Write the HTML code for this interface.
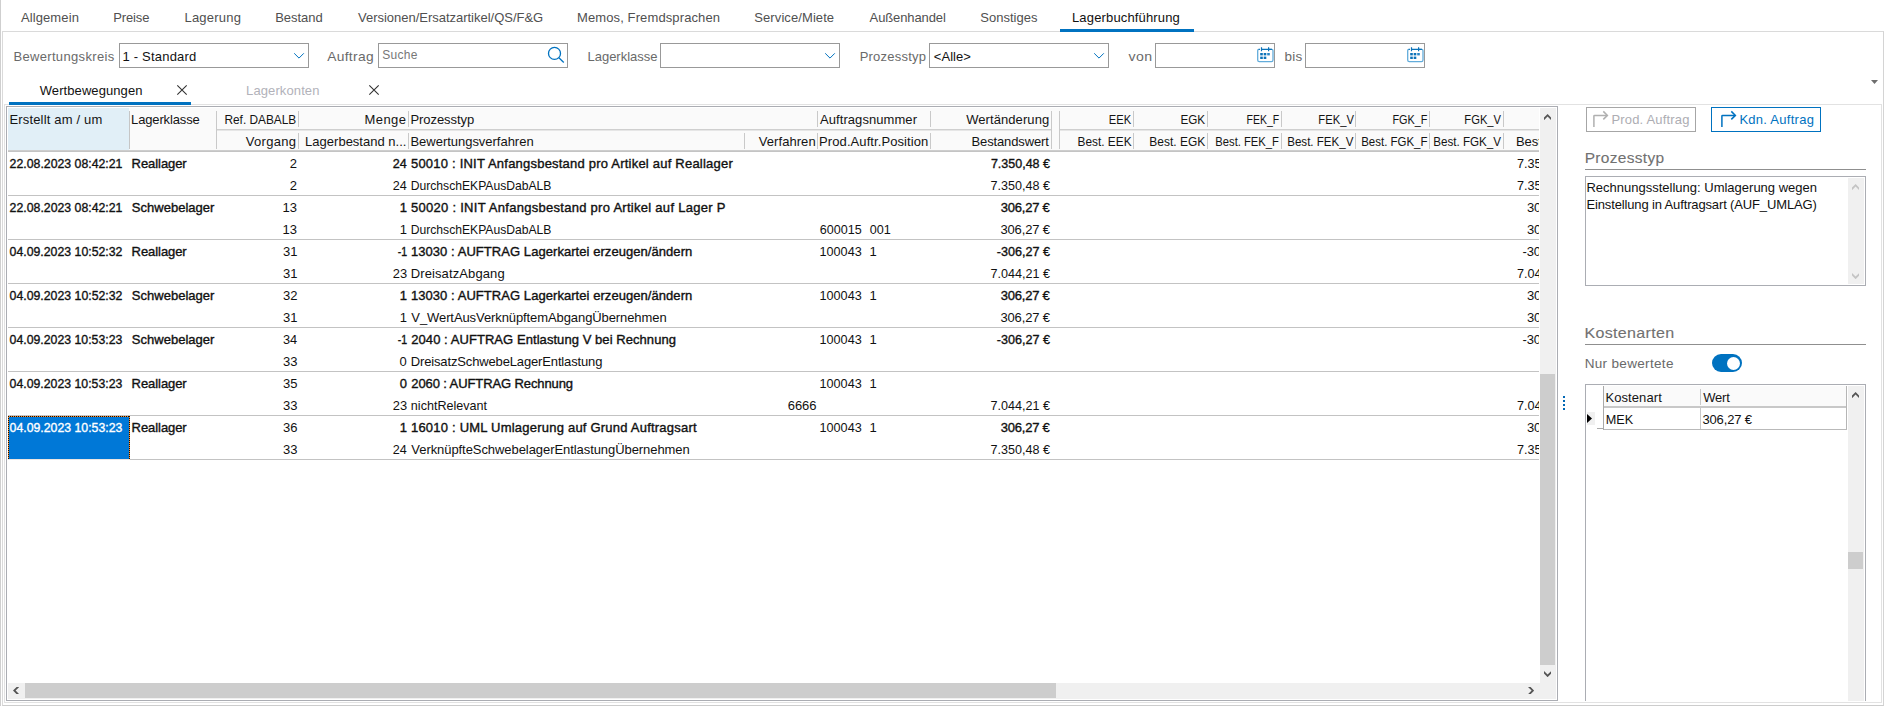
<!DOCTYPE html>
<html lang="de"><head><meta charset="utf-8"><title>Lagerbuchführung</title>
<style>
html,body{margin:0;padding:0;background:#fff;overflow:hidden}
#app{position:relative;width:1884px;height:706px;overflow:hidden;background:#fff;font-family:"Liberation Sans", sans-serif;font-size:13px}
#app div,#app span,#app svg{position:absolute;display:block;white-space:pre}
</style></head><body><div id="app">
<div style="left:0px;top:0px;width:1px;height:706px;background:#cfcfcf;"></div>
<div style="left:2px;top:31px;width:1882px;height:675px;box-sizing:border-box;border:1px solid #dadada;border-bottom-color:#cdcdcd;border-right-color:#d4d4d4"></div>
<span style="left:20.89px;top:10.00px;font-size:13px;line-height:15px;color:#505050;letter-spacing:0.115px;">Allgemein</span>
<span style="left:113.21px;top:10.00px;font-size:13px;line-height:15px;color:#505050;letter-spacing:-0.124px;">Preise</span>
<span style="left:184.46px;top:10.00px;font-size:13px;line-height:15px;color:#505050;letter-spacing:0.222px;">Lagerung</span>
<span style="left:275.21px;top:10.00px;font-size:13px;line-height:15px;color:#505050;letter-spacing:-0.027px;">Bestand</span>
<span style="left:358.04px;top:10.00px;font-size:13px;line-height:15px;color:#505050;letter-spacing:-0.019px;">Versionen/Ersatzartikel/QS/F&amp;G</span>
<span style="left:576.99px;top:10.00px;font-size:13px;line-height:15px;color:#505050;letter-spacing:0.114px;">Memos, Fremdsprachen</span>
<span style="left:754.31px;top:10.00px;font-size:13px;line-height:15px;color:#505050;letter-spacing:0.088px;">Service/Miete</span>
<span style="left:869.60px;top:10.00px;font-size:13px;line-height:15px;color:#505050;letter-spacing:-0.113px;">Außenhandel</span>
<span style="left:980.31px;top:10.00px;font-size:13px;line-height:15px;color:#505050;">Sonstiges</span>
<span style="left:1071.99px;top:10.00px;font-size:13px;line-height:15px;color:#111;letter-spacing:0.154px;">Lagerbuchführung</span>
<div style="left:1060px;top:29px;width:134px;height:3px;background:#0072c0;"></div>
<span style="left:13.42px;top:49.00px;font-size:13px;line-height:15px;color:#6a6a6a;letter-spacing:0.333px;">Bewertungskreis</span>
<div style="left:119px;top:43px;width:190px;height:25px;box-sizing:border-box;border:1px solid #999999;background:#fff;"></div>
<span style="left:122.48px;top:49.00px;font-size:13px;line-height:15px;color:#111;letter-spacing:0.210px;">1 - Standard</span>
<svg style="left:293px;top:52px" width="12" height="8" viewBox="0 0 12 8"><path d="M1.2 1.3 L6 6.1 L10.8 1.3" fill="none" stroke="#0072c0" stroke-width="1.0"/></svg>
<span style="left:327px;top:49.00px;font-size:13px;line-height:15px;color:#6a6a6a;transform:translateX(0.19px) scaleX(1.0615);transform-origin:0 0;letter-spacing:0.300px;">Auftrag</span>
<div style="left:378px;top:43px;width:190px;height:25px;box-sizing:border-box;border:1px solid #999999;background:#fff;"></div>
<span style="left:382.22px;top:47.84px;font-size:12px;line-height:14px;color:#777;letter-spacing:0.281px;">Suche</span>
<svg style="left:546px;top:45px" width="20" height="20" viewBox="0 0 20 20"><circle cx="8.5" cy="8.4" r="6" fill="none" stroke="#0072c0" stroke-width="1.3"/><path d="M12.9 12.8 L17.8 17.5" stroke="#0072c0" stroke-width="1.3" fill="none"/></svg>
<span style="left:587.46px;top:49.00px;font-size:13px;line-height:15px;color:#6a6a6a;letter-spacing:-0.005px;">Lagerklasse</span>
<div style="left:660px;top:43px;width:180px;height:25px;box-sizing:border-box;border:1px solid #999999;background:#fff;"></div>
<svg style="left:824px;top:52px" width="12" height="8" viewBox="0 0 12 8"><path d="M1.2 1.3 L6 6.1 L10.8 1.3" fill="none" stroke="#0072c0" stroke-width="1.0"/></svg>
<span style="left:859.67px;top:49.00px;font-size:13px;line-height:15px;color:#6a6a6a;letter-spacing:0.227px;">Prozesstyp</span>
<div style="left:929px;top:43px;width:180px;height:25px;box-sizing:border-box;border:1px solid #999999;background:#fff;"></div>
<span style="left:933.85px;top:49.00px;font-size:13px;line-height:15px;color:#111;letter-spacing:0.018px;">&lt;Alle&gt;</span>
<svg style="left:1093px;top:52px" width="12" height="8" viewBox="0 0 12 8"><path d="M1.2 1.3 L6 6.1 L10.8 1.3" fill="none" stroke="#0072c0" stroke-width="1.0"/></svg>
<span style="left:1128px;top:49.00px;font-size:13px;line-height:15px;color:#6a6a6a;transform:translateX(0.61px) scaleX(1.0852);transform-origin:0 0;letter-spacing:0.300px;">von</span>
<div style="left:1155px;top:43px;width:120px;height:25px;box-sizing:border-box;border:1px solid #999999;background:#fff;"></div>
<span style="left:1284px;top:49.00px;font-size:13px;line-height:15px;color:#6a6a6a;transform:translateX(0.46px) scaleX(1.0349);transform-origin:0 0;letter-spacing:0.300px;">bis</span>
<div style="left:1305px;top:43px;width:120px;height:25px;box-sizing:border-box;border:1px solid #999999;background:#fff;"></div>
<svg style="left:1257px;top:47px" width="17" height="16" viewBox="0 0 17 16"><path d="M2.4 2.4 H1.9 Q0.7 2.4 0.7 3.8 V13 Q0.7 14.6 2.3 14.6 H14.4 Q16 14.6 16 13 V3.8 Q16 2.4 14.8 2.4 H12" fill="none" stroke="#62acdb" stroke-width="1.3"/><path d="M1.7 2.4 H2.9 M4.5 2.4 H11.6 M11.6 2.4 H14.9" stroke="#0a72b8" stroke-width="1.1" fill="none"/><path d="M4.5 0.2 V4.2 M11.6 0.2 V4.2" stroke="#0a72b8" stroke-width="1.2" fill="none"/><rect x="3.2" y="6.0" width="2.6" height="2.4" fill="#0a72b8"/><rect x="6.7" y="6.0" width="2.6" height="2.4" fill="#0a72b8"/><rect x="10.2" y="6.0" width="2.6" height="2.4" fill="#2a86c6"/><rect x="3.2" y="9.6" width="2.6" height="2.4" fill="#0a72b8"/><rect x="6.7" y="9.6" width="2.6" height="2.4" fill="#0a72b8"/></svg>
<svg style="left:1407px;top:47px" width="17" height="16" viewBox="0 0 17 16"><path d="M2.4 2.4 H1.9 Q0.7 2.4 0.7 3.8 V13 Q0.7 14.6 2.3 14.6 H14.4 Q16 14.6 16 13 V3.8 Q16 2.4 14.8 2.4 H12" fill="none" stroke="#62acdb" stroke-width="1.3"/><path d="M1.7 2.4 H2.9 M4.5 2.4 H11.6 M11.6 2.4 H14.9" stroke="#0a72b8" stroke-width="1.1" fill="none"/><path d="M4.5 0.2 V4.2 M11.6 0.2 V4.2" stroke="#0a72b8" stroke-width="1.2" fill="none"/><rect x="3.2" y="6.0" width="2.6" height="2.4" fill="#0a72b8"/><rect x="6.7" y="6.0" width="2.6" height="2.4" fill="#0a72b8"/><rect x="10.2" y="6.0" width="2.6" height="2.4" fill="#2a86c6"/><rect x="3.2" y="9.6" width="2.6" height="2.4" fill="#0a72b8"/><rect x="6.7" y="9.6" width="2.6" height="2.4" fill="#0a72b8"/></svg>
<svg style="left:1871px;top:80px" width="7" height="4" viewBox="0 0 7 4"><path d="M0 0 H7 L3.5 4 Z" fill="#6e6e6e"/></svg>
<span style="left:39.76px;top:83.00px;font-size:13px;line-height:15px;color:#111;letter-spacing:0.080px;">Wertbewegungen</span>
<svg style="left:175.5px;top:83.6px" width="12" height="12" viewBox="0 0 12 12"><path d="M1.3 1.3 L10.7 10.7 M10.7 1.3 L1.3 10.7" stroke="#333" stroke-width="1.1" fill="none"/></svg>
<span style="left:246.12px;top:83.00px;font-size:13px;line-height:15px;color:#b2b2ba;letter-spacing:0.102px;">Lagerkonten</span>
<svg style="left:367.5px;top:83.6px" width="12" height="12" viewBox="0 0 12 12"><path d="M1.3 1.3 L10.7 10.7 M10.7 1.3 L1.3 10.7" stroke="#333" stroke-width="1.1" fill="none"/></svg>
<div style="left:4px;top:104px;width:1878px;height:599px;box-sizing:border-box;border:1px solid #e2e2e2"></div>
<div style="left:9px;top:102px;width:182px;height:3px;background:#0072c0;"></div>
<div style="left:6px;top:106px;width:1552px;height:595px;box-sizing:border-box;border:1px solid #abadb3;background:#fff"></div>
<div style="left:8px;top:108px;width:1531px;height:42px;background:#fafafa;"></div>
<div style="left:8px;top:108px;width:121px;height:42px;background:#e1eff7;"></div>
<div style="left:8px;top:150px;width:1531px;height:1px;background:#cdcdcd;"></div>
<div style="left:8px;top:151px;width:1531px;height:1px;background:#c4c4c4;"></div>
<div style="left:217px;top:129px;width:835px;height:1px;background:#cfcfcf;"></div>
<div style="left:217px;top:130px;width:835px;height:1px;background:#e6e6e6;"></div>
<div style="left:1060px;top:129px;width:479px;height:1px;background:#cfcfcf;"></div>
<div style="left:1060px;top:130px;width:479px;height:1px;background:#e6e6e6;"></div>
<div style="left:129px;top:111px;width:1px;height:38px;background:#c6c6c6;"></div>
<div style="left:216px;top:111px;width:1px;height:38px;background:#c9c9c9;"></div>
<div style="left:298px;top:111px;width:1px;height:16px;background:#c9c9c9;"></div>
<div style="left:298px;top:133px;width:1px;height:16px;background:#c9c9c9;"></div>
<div style="left:408px;top:111px;width:1px;height:16px;background:#c9c9c9;"></div>
<div style="left:408px;top:133px;width:1px;height:16px;background:#c9c9c9;"></div>
<div style="left:817px;top:111px;width:1px;height:16px;background:#c9c9c9;"></div>
<div style="left:817px;top:133px;width:1px;height:16px;background:#c9c9c9;"></div>
<div style="left:930px;top:111px;width:1px;height:16px;background:#c9c9c9;"></div>
<div style="left:930px;top:133px;width:1px;height:16px;background:#c9c9c9;"></div>
<div style="left:1133px;top:111px;width:1px;height:16px;background:#c9c9c9;"></div>
<div style="left:1133px;top:133px;width:1px;height:16px;background:#c9c9c9;"></div>
<div style="left:1207px;top:111px;width:1px;height:16px;background:#c9c9c9;"></div>
<div style="left:1207px;top:133px;width:1px;height:16px;background:#c9c9c9;"></div>
<div style="left:1281px;top:111px;width:1px;height:16px;background:#c9c9c9;"></div>
<div style="left:1281px;top:133px;width:1px;height:16px;background:#c9c9c9;"></div>
<div style="left:1355px;top:111px;width:1px;height:16px;background:#c9c9c9;"></div>
<div style="left:1355px;top:133px;width:1px;height:16px;background:#c9c9c9;"></div>
<div style="left:1429px;top:111px;width:1px;height:16px;background:#c9c9c9;"></div>
<div style="left:1429px;top:133px;width:1px;height:16px;background:#c9c9c9;"></div>
<div style="left:1503px;top:111px;width:1px;height:16px;background:#c9c9c9;"></div>
<div style="left:1503px;top:133px;width:1px;height:16px;background:#c9c9c9;"></div>
<div style="left:744px;top:133px;width:1px;height:16px;background:#c9c9c9;"></div>
<div style="left:1051px;top:111px;width:1px;height:38px;background:#c9c9c9;"></div>
<div style="left:1059px;top:111px;width:1px;height:38px;background:#c9c9c9;"></div>
<span style="left:9.42px;top:112.00px;font-size:13px;line-height:15px;color:#141414;letter-spacing:0.171px;">Erstellt am / um</span>
<span style="left:131.06px;top:112.00px;font-size:13px;line-height:15px;color:#141414;letter-spacing:-0.135px;">Lagerklasse</span>
<span style="left:224px;top:112.00px;font-size:13px;line-height:15px;color:#141414;transform:translateX(0.46px) scaleX(0.9119);transform-origin:0 0;">Ref. DABALB</span>
<span style="left:364.57px;top:112.00px;font-size:13px;line-height:15px;color:#141414;letter-spacing:0.421px;">Menge</span>
<span style="left:410.46px;top:112.00px;font-size:13px;line-height:15px;color:#141414;letter-spacing:-0.064px;">Prozesstyp</span>
<span style="left:820.04px;top:112.00px;font-size:13px;line-height:15px;color:#141414;letter-spacing:0.067px;">Auftragsnummer</span>
<span style="left:966.14px;top:112.00px;font-size:13px;line-height:15px;color:#141414;letter-spacing:0.084px;">Wertänderung</span>
<span style="left:1108px;top:112.00px;font-size:13px;line-height:15px;color:#141414;transform:translateX(0.82px) scaleX(0.8607);transform-origin:0 0;">EEK</span>
<span style="left:1180px;top:112.00px;font-size:13px;line-height:15px;color:#141414;transform:translateX(0.41px) scaleX(0.9007);transform-origin:0 0;">EGK</span>
<span style="left:1246px;top:112.00px;font-size:13px;line-height:15px;color:#141414;transform:translateX(0.50px) scaleX(0.8066);transform-origin:0 0;">FEK_F</span>
<span style="left:1318px;top:112.00px;font-size:13px;line-height:15px;color:#141414;transform:translateX(0.36px) scaleX(0.8628);transform-origin:0 0;">FEK_V</span>
<span style="left:1392px;top:112.00px;font-size:13px;line-height:15px;color:#141414;transform:translateX(0.41px) scaleX(0.8339);transform-origin:0 0;">FGK_F</span>
<span style="left:1464px;top:112.00px;font-size:13px;line-height:15px;color:#141414;transform:translateX(0.34px) scaleX(0.8618);transform-origin:0 0;">FGK_V</span>
<span style="left:245.87px;top:134.00px;font-size:13px;line-height:15px;color:#141414;letter-spacing:0.287px;">Vorgang</span>
<span style="left:305.12px;top:134.00px;font-size:13px;line-height:15px;color:#141414;letter-spacing:0.007px;">Lagerbestand n...</span>
<span style="left:410.46px;top:134.00px;font-size:13px;line-height:15px;color:#141414;letter-spacing:-0.023px;">Bewertungsverfahren</span>
<span style="left:758.83px;top:134.00px;font-size:13px;line-height:15px;color:#141414;letter-spacing:0.053px;">Verfahren</span>
<span style="left:819.12px;top:134.00px;font-size:13px;line-height:15px;color:#141414;letter-spacing:0.081px;">Prod.Auftr.Position</span>
<span style="left:971.49px;top:134.00px;font-size:13px;line-height:15px;color:#141414;letter-spacing:-0.121px;">Bestandswert</span>
<span style="left:1077px;top:134.00px;font-size:13px;line-height:15px;color:#141414;transform:translateX(0.52px) scaleX(0.9125);transform-origin:0 0;">Best. EEK</span>
<span style="left:1149px;top:134.00px;font-size:13px;line-height:15px;color:#141414;transform:translateX(0.37px) scaleX(0.9211);transform-origin:0 0;">Best. EGK</span>
<span style="left:1215px;top:134.00px;font-size:13px;line-height:15px;color:#141414;transform:translateX(0.32px) scaleX(0.8622);transform-origin:0 0;">Best. FEK_F</span>
<span style="left:1287px;top:134.00px;font-size:13px;line-height:15px;color:#141414;transform:translateX(0.22px) scaleX(0.8901);transform-origin:0 0;">Best. FEK_V</span>
<span style="left:1361px;top:134.00px;font-size:13px;line-height:15px;color:#141414;transform:translateX(0.18px) scaleX(0.8824);transform-origin:0 0;">Best. FGK_F</span>
<span style="left:1433px;top:134.00px;font-size:13px;line-height:15px;color:#141414;transform:translateX(0.19px) scaleX(0.8937);transform-origin:0 0;">Best. FGK_V</span>
<div style="left:0;top:0;width:1539px;height:706px;overflow:hidden"><span style="left:1515.99px;top:134.00px;font-size:13px;line-height:15px;color:#141414;letter-spacing:-0.082px;">Best. MEK</span></div>
<div style="left:8px;top:416px;width:122px;height:43px;background:#0078d7;"></div>
<div style="left:8px;top:195px;width:1531px;height:1px;background:#c3c3c3;"></div>
<div style="left:8px;top:239px;width:1531px;height:1px;background:#c3c3c3;"></div>
<div style="left:8px;top:283px;width:1531px;height:1px;background:#c3c3c3;"></div>
<div style="left:8px;top:327px;width:1531px;height:1px;background:#c3c3c3;"></div>
<div style="left:8px;top:371px;width:1531px;height:1px;background:#c3c3c3;"></div>
<div style="left:8px;top:415px;width:1531px;height:1px;background:#c3c3c3;"></div>
<div style="left:8px;top:459px;width:1531px;height:1px;background:#c3c3c3;"></div>
<div style="left:8px;top:416px;width:122px;height:1px;background:repeating-linear-gradient(90deg,#1a1200 0 1px,#ff8a2a 1px 2px);"></div>
<div style="left:8px;top:416px;width:1px;height:43px;background:repeating-linear-gradient(180deg,#1a1200 0 1px,#ff8a2a 1px 2px);"></div>
<div style="left:129px;top:416px;width:1px;height:43px;background:repeating-linear-gradient(180deg,#1a1200 0 1px,#ff8a2a 1px 2px);"></div>
<div style="left:8px;top:459px;width:122px;height:1px;background:#ece6e2;"></div>
<span style="left:9px;top:156.00px;font-size:13px;line-height:15px;color:#111;transform:translateX(0.62px) scaleX(0.9455);transform-origin:0 0;-webkit-text-stroke:0.37px #111;">22.08.2023 08:42:21</span>
<span style="left:131.62px;top:156.00px;font-size:13px;line-height:15px;color:#111;letter-spacing:-0.070px;-webkit-text-stroke:0.37px #111;">Reallager</span>
<span style="left:289.75px;top:156.00px;font-size:13px;line-height:15px;color:#111;">2</span>
<span style="left:392px;top:156.00px;font-size:13px;line-height:15px;color:#111;transform:translateX(0.81px) scaleX(0.9675);transform-origin:0 0;-webkit-text-stroke:0.37px #111;">24</span>
<span style="left:410.98px;top:156.00px;font-size:13px;line-height:15px;color:#111;letter-spacing:0.216px;-webkit-text-stroke:0.37px #111;">50010 : INIT Anfangsbestand pro Artikel auf Reallager</span>
<span style="left:990px;top:156.00px;font-size:13px;line-height:15px;color:#111;transform:translateX(0.92px) scaleX(0.9607);transform-origin:0 0;-webkit-text-stroke:0.37px #111;">7.350,48 €</span>
<div style="left:0;top:0;width:1539px;height:706px;overflow:hidden"><span style="left:1517px;top:156.00px;font-size:13px;line-height:15px;color:#111;transform:translateX(0.01px) scaleX(0.9696);transform-origin:0 0;">7.350,48 €</span></div>
<span style="left:289.75px;top:178.00px;font-size:13px;line-height:15px;color:#111;">2</span>
<span style="left:392px;top:178.00px;font-size:13px;line-height:15px;color:#111;transform:translateX(0.77px) scaleX(0.9706);transform-origin:0 0;">24</span>
<span style="left:410px;top:178.00px;font-size:13px;line-height:15px;color:#111;transform:translateX(0.68px) scaleX(0.9337);transform-origin:0 0;">DurchschEKPAusDabALB</span>
<span style="left:990px;top:178.00px;font-size:13px;line-height:15px;color:#111;transform:translateX(0.61px) scaleX(0.9670);transform-origin:0 0;">7.350,48 €</span>
<div style="left:0;top:0;width:1539px;height:706px;overflow:hidden"><span style="left:1517px;top:178.00px;font-size:13px;line-height:15px;color:#111;transform:translateX(0.01px) scaleX(0.9696);transform-origin:0 0;">7.350,48 €</span></div>
<span style="left:9px;top:200.00px;font-size:13px;line-height:15px;color:#111;transform:translateX(0.62px) scaleX(0.9455);transform-origin:0 0;-webkit-text-stroke:0.37px #111;">22.08.2023 08:42:21</span>
<span style="left:131.84px;top:200.00px;font-size:13px;line-height:15px;color:#111;letter-spacing:0.017px;-webkit-text-stroke:0.37px #111;">Schwebelager</span>
<span style="left:282.53px;top:200.00px;font-size:13px;line-height:15px;color:#111;">13</span>
<span style="left:399.71px;top:200.00px;font-size:13px;line-height:15px;color:#111;-webkit-text-stroke:0.37px #111;">1</span>
<span style="left:410.98px;top:200.00px;font-size:13px;line-height:15px;color:#111;letter-spacing:0.280px;-webkit-text-stroke:0.37px #111;">50020 : INIT Anfangsbestand pro Artikel auf Lager P</span>
<span style="left:1000.79px;top:200.00px;font-size:13px;line-height:15px;color:#111;letter-spacing:-0.234px;-webkit-text-stroke:0.37px #111;">306,27 €</span>
<div style="left:0;top:0;width:1539px;height:706px;overflow:hidden"><span style="left:1526.93px;top:200.00px;font-size:13px;line-height:15px;color:#111;letter-spacing:-0.119px;">306,27 €</span></div>
<span style="left:282.53px;top:222.00px;font-size:13px;line-height:15px;color:#111;">13</span>
<span style="left:399.68px;top:222.00px;font-size:13px;line-height:15px;color:#111;">1</span>
<span style="left:410px;top:222.00px;font-size:13px;line-height:15px;color:#111;transform:translateX(0.68px) scaleX(0.9337);transform-origin:0 0;">DurchschEKPAusDabALB</span>
<span style="left:819px;top:222.00px;font-size:13px;line-height:15px;color:#111;transform:translateX(0.86px) scaleX(0.9661);transform-origin:0 0;">600015</span>
<span style="left:869px;top:222.00px;font-size:13px;line-height:15px;color:#111;transform:translateX(0.67px) scaleX(0.9705);transform-origin:0 0;">001</span>
<span style="left:1000.46px;top:222.00px;font-size:13px;line-height:15px;color:#111;letter-spacing:-0.152px;">306,27 €</span>
<div style="left:0;top:0;width:1539px;height:706px;overflow:hidden"><span style="left:1526.93px;top:222.00px;font-size:13px;line-height:15px;color:#111;letter-spacing:-0.119px;">306,27 €</span></div>
<span style="left:9px;top:244.00px;font-size:13px;line-height:15px;color:#111;transform:translateX(0.54px) scaleX(0.9465);transform-origin:0 0;-webkit-text-stroke:0.37px #111;">04.09.2023 10:52:32</span>
<span style="left:131.62px;top:244.00px;font-size:13px;line-height:15px;color:#111;letter-spacing:-0.070px;-webkit-text-stroke:0.37px #111;">Reallager</span>
<span style="left:282.93px;top:244.00px;font-size:13px;line-height:15px;color:#111;">31</span>
<span style="left:397px;top:244.00px;font-size:13px;line-height:15px;color:#111;transform:translateX(0.64px) scaleX(0.8120);transform-origin:0 0;-webkit-text-stroke:0.37px #111;">-1</span>
<span style="left:410.94px;top:244.00px;font-size:13px;line-height:15px;color:#111;letter-spacing:0.057px;-webkit-text-stroke:0.37px #111;">13030 : AUFTRAG Lagerkartei erzeugen/ändern</span>
<span style="left:819px;top:244.00px;font-size:13px;line-height:15px;color:#111;transform:translateX(0.53px) scaleX(0.9725);transform-origin:0 0;">100043</span>
<span style="left:869.41px;top:244.00px;font-size:13px;line-height:15px;color:#111;">1</span>
<span style="left:996px;top:244.00px;font-size:13px;line-height:15px;color:#111;transform:translateX(0.80px) scaleX(0.9687);transform-origin:0 0;-webkit-text-stroke:0.37px #111;">-306,27 €</span>
<div style="left:0;top:0;width:1539px;height:706px;overflow:hidden"><span style="left:1522.61px;top:244.00px;font-size:13px;line-height:15px;color:#111;letter-spacing:-0.167px;">-306,27 €</span></div>
<span style="left:282.93px;top:266.00px;font-size:13px;line-height:15px;color:#111;">31</span>
<span style="left:392px;top:266.00px;font-size:13px;line-height:15px;color:#111;transform:translateX(0.75px) scaleX(0.9919);transform-origin:0 0;">23</span>
<span style="left:410.73px;top:266.00px;font-size:13px;line-height:15px;color:#111;letter-spacing:0.108px;">DreisatzAbgang</span>
<span style="left:990px;top:266.00px;font-size:13px;line-height:15px;color:#111;transform:translateX(0.61px) scaleX(0.9670);transform-origin:0 0;">7.044,21 €</span>
<div style="left:0;top:0;width:1539px;height:706px;overflow:hidden"><span style="left:1517px;top:266.00px;font-size:13px;line-height:15px;color:#111;transform:translateX(0.01px) scaleX(0.9696);transform-origin:0 0;">7.044,21 €</span></div>
<span style="left:9px;top:288.00px;font-size:13px;line-height:15px;color:#111;transform:translateX(0.54px) scaleX(0.9465);transform-origin:0 0;-webkit-text-stroke:0.37px #111;">04.09.2023 10:52:32</span>
<span style="left:131.84px;top:288.00px;font-size:13px;line-height:15px;color:#111;letter-spacing:0.017px;-webkit-text-stroke:0.37px #111;">Schwebelager</span>
<span style="left:282.93px;top:288.00px;font-size:13px;line-height:15px;color:#111;letter-spacing:0.024px;">32</span>
<span style="left:399.71px;top:288.00px;font-size:13px;line-height:15px;color:#111;-webkit-text-stroke:0.37px #111;">1</span>
<span style="left:410.94px;top:288.00px;font-size:13px;line-height:15px;color:#111;letter-spacing:0.057px;-webkit-text-stroke:0.37px #111;">13030 : AUFTRAG Lagerkartei erzeugen/ändern</span>
<span style="left:819px;top:288.00px;font-size:13px;line-height:15px;color:#111;transform:translateX(0.53px) scaleX(0.9725);transform-origin:0 0;">100043</span>
<span style="left:869.41px;top:288.00px;font-size:13px;line-height:15px;color:#111;">1</span>
<span style="left:1000.79px;top:288.00px;font-size:13px;line-height:15px;color:#111;letter-spacing:-0.234px;-webkit-text-stroke:0.37px #111;">306,27 €</span>
<div style="left:0;top:0;width:1539px;height:706px;overflow:hidden"><span style="left:1526.93px;top:288.00px;font-size:13px;line-height:15px;color:#111;letter-spacing:-0.119px;">306,27 €</span></div>
<span style="left:282.93px;top:310.00px;font-size:13px;line-height:15px;color:#111;">31</span>
<span style="left:399.68px;top:310.00px;font-size:13px;line-height:15px;color:#111;">1</span>
<span style="left:411.34px;top:310.00px;font-size:13px;line-height:15px;color:#111;letter-spacing:-0.091px;">V_WertAusVerknüpftemAbgangÜbernehmen</span>
<span style="left:1000.46px;top:310.00px;font-size:13px;line-height:15px;color:#111;letter-spacing:-0.152px;">306,27 €</span>
<div style="left:0;top:0;width:1539px;height:706px;overflow:hidden"><span style="left:1526.93px;top:310.00px;font-size:13px;line-height:15px;color:#111;letter-spacing:-0.119px;">306,27 €</span></div>
<span style="left:9px;top:332.00px;font-size:13px;line-height:15px;color:#111;transform:translateX(0.54px) scaleX(0.9457);transform-origin:0 0;-webkit-text-stroke:0.37px #111;">04.09.2023 10:53:23</span>
<span style="left:131.84px;top:332.00px;font-size:13px;line-height:15px;color:#111;letter-spacing:0.017px;-webkit-text-stroke:0.37px #111;">Schwebelager</span>
<span style="left:282px;top:332.00px;font-size:13px;line-height:15px;color:#111;transform:translateX(0.92px) scaleX(0.9811);transform-origin:0 0;">34</span>
<span style="left:397px;top:332.00px;font-size:13px;line-height:15px;color:#111;transform:translateX(0.64px) scaleX(0.8120);transform-origin:0 0;-webkit-text-stroke:0.37px #111;">-1</span>
<span style="left:411.27px;top:332.00px;font-size:13px;line-height:15px;color:#111;letter-spacing:0.061px;-webkit-text-stroke:0.37px #111;">2040 : AUFTRAG Entlastung V bei Rechnung</span>
<span style="left:819px;top:332.00px;font-size:13px;line-height:15px;color:#111;transform:translateX(0.53px) scaleX(0.9725);transform-origin:0 0;">100043</span>
<span style="left:869.41px;top:332.00px;font-size:13px;line-height:15px;color:#111;">1</span>
<span style="left:996px;top:332.00px;font-size:13px;line-height:15px;color:#111;transform:translateX(0.80px) scaleX(0.9687);transform-origin:0 0;-webkit-text-stroke:0.37px #111;">-306,27 €</span>
<div style="left:0;top:0;width:1539px;height:706px;overflow:hidden"><span style="left:1522.61px;top:332.00px;font-size:13px;line-height:15px;color:#111;letter-spacing:-0.167px;">-306,27 €</span></div>
<span style="left:282.93px;top:354.00px;font-size:13px;line-height:15px;color:#111;letter-spacing:0.192px;">33</span>
<span style="left:399.54px;top:354.00px;font-size:13px;line-height:15px;color:#111;">0</span>
<span style="left:410.73px;top:354.00px;font-size:13px;line-height:15px;color:#111;letter-spacing:-0.142px;">DreisatzSchwebeLagerEntlastung</span>
<span style="left:9px;top:376.00px;font-size:13px;line-height:15px;color:#111;transform:translateX(0.54px) scaleX(0.9457);transform-origin:0 0;-webkit-text-stroke:0.37px #111;">04.09.2023 10:53:23</span>
<span style="left:131.62px;top:376.00px;font-size:13px;line-height:15px;color:#111;letter-spacing:-0.070px;-webkit-text-stroke:0.37px #111;">Reallager</span>
<span style="left:282.93px;top:376.00px;font-size:13px;line-height:15px;color:#111;letter-spacing:0.157px;">35</span>
<span style="left:399.83px;top:376.00px;font-size:13px;line-height:15px;color:#111;-webkit-text-stroke:0.37px #111;">0</span>
<span style="left:411.27px;top:376.00px;font-size:13px;line-height:15px;color:#111;letter-spacing:-0.100px;-webkit-text-stroke:0.37px #111;">2060 : AUFTRAG Rechnung</span>
<span style="left:819px;top:376.00px;font-size:13px;line-height:15px;color:#111;transform:translateX(0.53px) scaleX(0.9725);transform-origin:0 0;">100043</span>
<span style="left:869.41px;top:376.00px;font-size:13px;line-height:15px;color:#111;">1</span>
<span style="left:282.93px;top:398.00px;font-size:13px;line-height:15px;color:#111;letter-spacing:0.192px;">33</span>
<span style="left:392px;top:398.00px;font-size:13px;line-height:15px;color:#111;transform:translateX(0.75px) scaleX(0.9919);transform-origin:0 0;">23</span>
<span style="left:410px;top:398.00px;font-size:13px;line-height:15px;color:#111;transform:translateX(0.85px) scaleX(0.9672);transform-origin:0 0;">nichtRelevant</span>
<span style="left:787.69px;top:398.00px;font-size:13px;line-height:15px;color:#111;letter-spacing:-0.040px;">6666</span>
<span style="left:990px;top:398.00px;font-size:13px;line-height:15px;color:#111;transform:translateX(0.61px) scaleX(0.9670);transform-origin:0 0;">7.044,21 €</span>
<div style="left:0;top:0;width:1539px;height:706px;overflow:hidden"><span style="left:1517px;top:398.00px;font-size:13px;line-height:15px;color:#111;transform:translateX(0.01px) scaleX(0.9696);transform-origin:0 0;">7.044,21 €</span></div>
<span style="left:9px;top:420.00px;font-size:13px;line-height:15px;color:#fff;transform:translateX(0.54px) scaleX(0.9457);transform-origin:0 0;-webkit-text-stroke:0.37px #fff;">04.09.2023 10:53:23</span>
<span style="left:131.62px;top:420.00px;font-size:13px;line-height:15px;color:#111;letter-spacing:-0.070px;-webkit-text-stroke:0.37px #111;">Reallager</span>
<span style="left:282.93px;top:420.00px;font-size:13px;line-height:15px;color:#111;letter-spacing:0.188px;">36</span>
<span style="left:399.71px;top:420.00px;font-size:13px;line-height:15px;color:#111;-webkit-text-stroke:0.37px #111;">1</span>
<span style="left:410.94px;top:420.00px;font-size:13px;line-height:15px;color:#111;letter-spacing:0.218px;-webkit-text-stroke:0.37px #111;">16010 : UML Umlagerung auf Grund Auftragsart</span>
<span style="left:819px;top:420.00px;font-size:13px;line-height:15px;color:#111;transform:translateX(0.53px) scaleX(0.9725);transform-origin:0 0;">100043</span>
<span style="left:869.41px;top:420.00px;font-size:13px;line-height:15px;color:#111;">1</span>
<span style="left:1000.79px;top:420.00px;font-size:13px;line-height:15px;color:#111;letter-spacing:-0.234px;-webkit-text-stroke:0.37px #111;">306,27 €</span>
<div style="left:0;top:0;width:1539px;height:706px;overflow:hidden"><span style="left:1526.93px;top:420.00px;font-size:13px;line-height:15px;color:#111;letter-spacing:-0.119px;">306,27 €</span></div>
<span style="left:282.93px;top:442.00px;font-size:13px;line-height:15px;color:#111;letter-spacing:0.192px;">33</span>
<span style="left:392px;top:442.00px;font-size:13px;line-height:15px;color:#111;transform:translateX(0.77px) scaleX(0.9706);transform-origin:0 0;">24</span>
<span style="left:411.34px;top:442.00px;font-size:13px;line-height:15px;color:#111;letter-spacing:-0.067px;">VerknüpfteSchwebelagerEntlastungÜbernehmen</span>
<span style="left:990px;top:442.00px;font-size:13px;line-height:15px;color:#111;transform:translateX(0.61px) scaleX(0.9670);transform-origin:0 0;">7.350,48 €</span>
<div style="left:0;top:0;width:1539px;height:706px;overflow:hidden"><span style="left:1517px;top:442.00px;font-size:13px;line-height:15px;color:#111;transform:translateX(0.01px) scaleX(0.9696);transform-origin:0 0;">7.350,48 €</span></div>
<div style="left:1540px;top:108px;width:16px;height:575px;background:#f0f0f0;"></div>
<div style="left:1540px;top:374px;width:15px;height:291px;background:#cdcdcd;"></div>
<svg style="left:1544.00px;top:114.00px" width="7.2" height="6.2" viewBox="0 0 7.2 6.2"><polygon points="3.60,0.00 7.20,3.60 7.20,6.20 3.60,2.60 0.00,6.20 0.00,3.60" fill="#555"/></svg>
<svg style="left:1544.00px;top:670.90px" width="7.2" height="6.2" viewBox="0 0 7.2 6.2"><polygon points="3.60,6.20 7.20,2.60 7.20,0.00 3.60,3.60 0.00,0.00 0.00,2.60" fill="#555"/></svg>
<div style="left:8px;top:683px;width:1548px;height:16px;background:#f0f0f0;"></div>
<div style="left:25px;top:683px;width:1031px;height:15px;background:#cdcdcd;"></div>
<svg style="left:12.80px;top:686.90px" width="6.2" height="7.2" viewBox="0 0 6.2 7.2"><polygon points="0.00,3.60 3.60,7.20 6.20,7.20 2.60,3.60 6.20,0.00 3.60,0.00" fill="#555"/></svg>
<svg style="left:1527.80px;top:686.90px" width="6.2" height="7.2" viewBox="0 0 6.2 7.2"><polygon points="6.20,3.60 2.60,7.20 0.00,7.20 3.60,3.60 0.00,0.00 2.60,0.00" fill="#555"/></svg>
<div style="left:1563px;top:396px;width:2px;height:2px;background:#0067b4;"></div>
<div style="left:1563px;top:400px;width:2px;height:2px;background:#0067b4;"></div>
<div style="left:1563px;top:404px;width:2px;height:2px;background:#0067b4;"></div>
<div style="left:1563px;top:408px;width:2px;height:2px;background:#0067b4;"></div>
<div style="left:1586px;top:107px;width:110px;height:25px;box-sizing:border-box;border:1px solid #a6a6a6;background:#fff;"></div>
<div style="left:1711px;top:107px;width:110px;height:25px;box-sizing:border-box;border:1px solid #0072c0;background:#fff;"></div>
<svg style="left:1592px;top:110px" width="18" height="18" viewBox="0 0 18 18"><path d="M1.9 17 V6.1 Q1.9 5.4 2.6 5.4 H15.2" fill="none" stroke="#b0b0b0" stroke-width="1.5"/><path d="M11.3 1.4 L15.4 5.4 L11.3 9.4" fill="none" stroke="#b0b0b0" stroke-width="1.5"/></svg>
<svg style="left:1720px;top:110px" width="18" height="18" viewBox="0 0 18 18"><path d="M1.9 17 V6.1 Q1.9 5.4 2.6 5.4 H15.2" fill="none" stroke="#0072c0" stroke-width="1.5"/><path d="M11.3 1.4 L15.4 5.4 L11.3 9.4" fill="none" stroke="#0072c0" stroke-width="1.5"/></svg>
<span style="left:1611.42px;top:112.00px;font-size:13px;line-height:15px;color:#adadb3;letter-spacing:0.174px;">Prod. Auftrag</span>
<span style="left:1739.40px;top:112.00px;font-size:13px;line-height:15px;color:#0072c0;letter-spacing:0.267px;">Kdn. Auftrag</span>
<span style="left:1584px;top:149.30px;font-size:15px;line-height:17px;color:#717171;transform:translateX(0.65px) scaleX(1.0327);transform-origin:0 0;letter-spacing:0.300px;-webkit-text-stroke:0.12px #717171;">Prozesstyp</span>
<div style="left:1585px;top:169px;width:281px;height:1px;background:#8f8f8f;"></div>
<div style="left:1585px;top:176px;width:281px;height:110px;box-sizing:border-box;border:1px solid #abadb3;background:#fff;"></div>
<div style="left:1848px;top:178px;width:16px;height:106px;background:#f0f0f0;"></div>
<svg style="left:1852.00px;top:184.10px" width="7.2" height="6.2" viewBox="0 0 7.2 6.2"><polygon points="3.60,0.00 7.20,3.60 7.20,6.20 3.60,2.60 0.00,6.20 0.00,3.60" fill="#c4c4c4"/></svg>
<svg style="left:1852.00px;top:272.70px" width="7.2" height="6.2" viewBox="0 0 7.2 6.2"><polygon points="3.60,6.20 7.20,2.60 7.20,0.00 3.60,3.60 0.00,0.00 0.00,2.60" fill="#c4c4c4"/></svg>
<span style="left:1586.46px;top:180.00px;font-size:13px;line-height:15px;color:#111;">Rechnungsstellung: Umlagerung wegen</span>
<span style="left:1586.46px;top:197.00px;font-size:13px;line-height:15px;color:#111;letter-spacing:-0.140px;">Einstellung in Auftragsart (AUF_UMLAG)</span>
<span style="left:1584px;top:324.30px;font-size:15px;line-height:17px;color:#717171;transform:translateX(0.43px) scaleX(1.0696);transform-origin:0 0;letter-spacing:0.300px;-webkit-text-stroke:0.12px #717171;">Kostenarten</span>
<div style="left:1585px;top:344px;width:281px;height:1px;background:#8f8f8f;"></div>
<span style="left:1584px;top:356.00px;font-size:13px;line-height:15px;color:#6a6a6a;transform:translateX(0.67px) scaleX(1.0416);transform-origin:0 0;letter-spacing:0.300px;">Nur bewertete</span>
<div style="left:1712px;top:354px;width:30px;height:18px;border-radius:9px;background:#0072c0"></div>
<div style="left:1727px;top:356.5px;width:13px;height:13px;border-radius:7px;background:#fff"></div>
<div style="left:1585px;top:384px;width:281px;height:317px;box-sizing:border-box;border:1px solid #abadb3;border-bottom:none;background:#fff"></div>
<div style="left:1604px;top:386px;width:242px;height:20px;background:#fafafa;"></div>
<div style="left:1604px;top:406px;width:243px;height:2px;background:#c8c8c8;"></div>
<div style="left:1603px;top:386px;width:1px;height:44px;background:#a9a9a9;"></div>
<div style="left:1846px;top:386px;width:1px;height:44px;background:#b5b5b5;"></div>
<div style="left:1700px;top:389px;width:1px;height:16px;background:#c9c9c9;"></div>
<div style="left:1700px;top:408px;width:1px;height:21px;background:#c9c9c9;"></div>
<div style="left:1597px;top:428px;width:7px;height:1px;background:#a9a9a9;"></div>
<div style="left:1604px;top:429px;width:243px;height:1px;background:#b9b9b9;"></div>
<div style="left:1587px;top:412px;width:8px;height:13px;background:#f0f0f0;"></div>
<svg style="left:1587.2px;top:414px" width="5" height="9" viewBox="0 0 5 9"><path d="M0 0 L5 4.5 L0 9 Z" fill="#000"/></svg>
<span style="left:1605.40px;top:389.50px;font-size:13px;line-height:15px;color:#141414;letter-spacing:0.096px;">Kostenart</span>
<span style="left:1703.14px;top:389.50px;font-size:13px;line-height:15px;color:#141414;letter-spacing:-0.175px;">Wert</span>
<span style="left:1605px;top:411.50px;font-size:13px;line-height:15px;color:#111;transform:translateX(0.73px) scaleX(0.9743);transform-origin:0 0;">MEK</span>
<span style="left:1702.46px;top:411.50px;font-size:13px;line-height:15px;color:#111;letter-spacing:-0.152px;">306,27 €</span>
<div style="left:1848px;top:386px;width:16px;height:315px;background:#f0f0f0;"></div>
<div style="left:1848px;top:552px;width:15px;height:17px;background:#cdcdcd;"></div>
<svg style="left:1852.00px;top:392.20px" width="7.2" height="6.2" viewBox="0 0 7.2 6.2"><polygon points="3.60,0.00 7.20,3.60 7.20,6.20 3.60,2.60 0.00,6.20 0.00,3.60" fill="#555"/></svg>
</div></body></html>
